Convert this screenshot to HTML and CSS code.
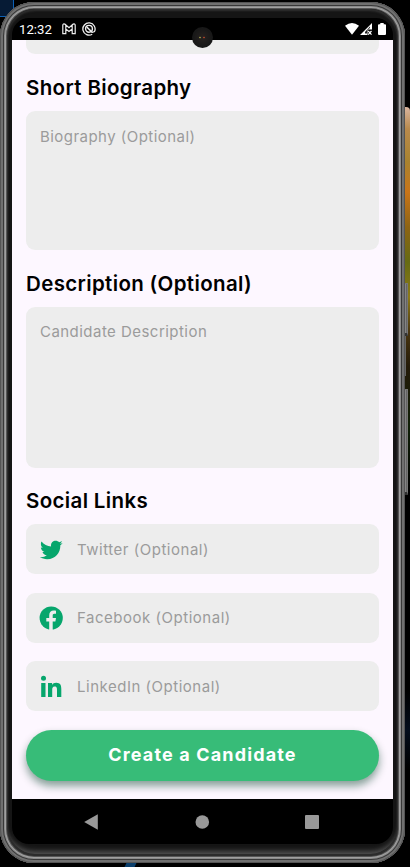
FILE: index.html
```html
<!DOCTYPE html>
<html lang="en">
<head>
<meta charset="utf-8">
<title>Create a Candidate</title>
<link rel="stylesheet" href="styles.css">
</head>
<body>
<div class="desktop">
  <div class="wall-corner"></div>
  <div class="wall-photo"></div>
  <div class="wall-glow"></div>
  <div class="wall-streak"></div>
  <div class="side-key power"></div>
  <div class="side-rail"></div>
  <div class="side-key volume"></div>
  <div class="phone">
    <div class="bezel">
      <div class="screen">
        <header class="status">
          <span class="clock">12:32</span>
          <svg class="mail" width="14" height="12" viewBox="0 0 14 12" fill="none" stroke="#eee" stroke-width="1.2"><path d="M.8 10.700V2.100Q1.200.3 2.800 1.100L7 4.700l4.200-3.600q1.600-.8 2 1v8.600h-3V6L7 8.500 3.800 6v4.700zM3.800 6V2M10.200 6V2"/></svg>
          <svg class="sync" width="14" height="14" viewBox="0 0 14 14" fill="none" stroke="#eee"><path d="M10.200 12.200A6.100 6.100 0 1 1 12.500 9.600L10 10.500" stroke-width="1.300"/><circle cx="7" cy="6.800" r="3.400" stroke-width="1.400"/><path d="M4.800 5l5.500 5.500" stroke-width="1.600"/></svg>
          <span class="grow"></span>
          <svg class="wifi" width="14" height="12" viewBox="0 0 14 12"><path d="M0 2.800Q7-2.600 14 2.800L7 11.800z" fill="#fff"/></svg>
          <svg class="signal" width="13" height="12" viewBox="0 0 13 12"><path d="M0 12L12 0v6.500H7.500V12z" fill="#fff"/><path d="M5 10.500h2V7l3-2V3.500L5 9z" fill="#222"/><path d="M8.200 8l3.300 3.600M11.500 8l-3.300 3.600" stroke="#fff" stroke-width="1.200"/></svg>
          <svg class="battery" width="8" height="12" viewBox="0 0 8 12"><path d="M2.300 0h3.400v1.300H7q1 0 1 1V11q0 1-1 1H1q-1 0-1-1V2.300q0-1 1-1h1.300z" fill="#fff"/></svg>
        </header>
        <main class="form">
          <div class="field stub"></div>
          <h2>Short Biography</h2>
          <div class="field area bio">Biography (Optional)</div>
          <h2>Description (Optional)</h2>
          <div class="field area desc">Candidate Description</div>
          <h2 class="social">Social Links</h2>
          <div class="links">
            <div class="field link">
              <svg width="24" height="24" viewBox="0 0 24 24"><path fill="#06a66c" d="M23.643 4.937c-.835.37-1.732.62-2.675.733.962-.576 1.700-1.490 2.048-2.578-.900.534-1.897.922-2.958 1.130-.850-.904-2.060-1.470-3.400-1.470-2.572 0-4.658 2.086-4.658 4.660 0 .364.042.718.120 1.060-3.873-.195-7.304-2.050-9.602-4.868-.400.690-.630 1.490-.630 2.342 0 1.616.823 3.043 2.072 3.878-.764-.025-1.482-.234-2.110-.583v.060c0 2.257 1.605 4.140 3.737 4.568-.392.106-.803.162-1.227.162-.300 0-.593-.028-.877-.082.593 1.850 2.313 3.198 4.352 3.234-1.595 1.250-3.604 1.995-5.786 1.995-.376 0-.747-.022-1.112-.065 2.062 1.323 4.510 2.093 7.140 2.093 8.570 0 13.255-7.098 13.255-13.254 0-.200-.005-.402-.014-.602.910-.658 1.700-1.477 2.323-2.410z"/></svg>
              <span>Twitter (Optional)</span>
            </div>
            <div class="field link">
              <svg width="24" height="24" viewBox="0 0 24 24"><circle cx="12.200" cy="12" r="11.600" fill="#06a66c"/><path fill="#ededed" d="M10.200 24v-8.500H7.300V12h2.900V9.500c0-3.200 1.700-4.900 4.600-4.900 1 0 2.200.2 2.200.2v3h-1.700c-1.200 0-1.600.8-1.600 1.600V12H17l-.6 3.500h-2.700V24z"/></svg>
              <span>Facebook (Optional)</span>
            </div>
            <div class="field link">
              <svg width="24" height="24" viewBox="0 0 24 24"><g fill="#06a66c"><circle cx="4.500" cy="3.300" r="2.500"/><path d="M2.200 8h4.300v14H2.200zM9 8h4.100v1.900c.7-1.300 2.200-2.200 4.100-2.200 4.300 0 5.100 2.800 5.100 6.500V22H18v-6.900c0-1.700 0-3.700-2.300-3.700s-2.500 1.800-2.500 3.600v7H9z"/></g></svg>
              <span>LinkedIn (Optional)</span>
            </div>
          </div>
          <button class="submit" type="button">Create a Candidate</button>
        </main>
        <nav class="nav">
          <svg width="16" height="16" viewBox="0 0 16 16"><path d="M14.800.3v15.400L1.200 8z" fill="#999"/></svg>
          <svg width="16" height="16" viewBox="0 0 16 16"><circle cx="8.300" cy="8" r="6.800" fill="#999"/></svg>
          <svg width="16" height="16" viewBox="0 0 16 16"><rect x="1" y="1" width="14" height="14" rx="1" fill="#999"/></svg>
        </nav>
      </div>
    </div>
    <div class="camera"></div>
  </div>
</div>
</body>
</html>
```
FILE: styles.css
```css
* { box-sizing: border-box; }
body { margin: 0; background: #000; font-family: Inter, "Liberation Sans", sans-serif; }
.desktop { position: relative; width: 410px; height: 867px; overflow: hidden; background: #000; padding: 2px 5px 4px 0; }
.wall-corner { position: absolute; left: 0; top: 0; width: 14px; height: 17px; background: #061b35; border-right: 1px solid #0c60b5; border-bottom: 1px solid #0c60b5; }
.wall-photo { position: absolute; left: 400px; top: 107px; width: 10px; height: 400px; border-top-right-radius: 4px; background: linear-gradient(#d9b5a0, #b98a4c 22px, #a9832f 55px, #c97519 85px, #8e6414 120px, #666b13 155px, #8d7a18 190px, #493510 225px, #241b09 260px, #102008 320px, #000 385px); }
.wall-glow { position: absolute; left: 404px; top: 690px; width: 6px; height: 80px; background: linear-gradient(#000, #040d1c 50%, #000); }
.wall-streak { position: absolute; left: 126px; top: 861px; width: 10px; height: 6px; background: #0b3f6c; transform: skewX(-25deg); }
.side-key { position: absolute; left: 402px; width: 6px; background: linear-gradient(90deg, #555, #888 60%, #555); border: 1px solid #777; border-bottom: 3px solid #333; }
.power { top: 283px; height: 53px; }
.volume { top: 389px; height: 106px; }
.side-rail { position: absolute; left: 404px; top: 336px; width: 2px; height: 40px; background: #666; }

.phone {
  position: relative; width: 405px; height: 861px; padding: 7px 8px 9px; border-radius: 34px;
  background: #2c2c2c;
  box-shadow: inset 0 0 0 1px #555, inset 0 0 0 3px #707070, inset 0 0 0 4px #383838, inset 0 0 0 5px #8a8a8a, inset 0 0 0 6px #a0a0a0, inset 0 0 0 7px #555;
}
.bezel { height: 845px; padding: 9px 4px 10px; border-radius: 27px; background: #151515; box-shadow: inset 0 -7px 5px -4px #505050, inset 0 2px 2px #303030; }
.screen { height: 826px; width: 381px; border-radius: 17px; overflow: hidden; background: #000; }
.status { height: 22px; display: flex; align-items: center; padding: 0 7px 0 7px; color: #fff; font-family: Roboto, sans-serif; font-size: 13.200px; }
.clock { width: 43px; }
.sync { margin-left: 6px; }
.grow { flex: 1; }
.signal { margin-left: 1px; }
.battery { margin-left: 5px; }
.camera { position: absolute; left: 192px; top: 25px; width: 21px; height: 21px; border-radius: 50%; background: radial-gradient(circle at 8px 10.500px, #8a8a45 0 .6px, transparent 1.200px), radial-gradient(circle at 12px 10.500px, #a04028 0 .6px, transparent 1.200px), radial-gradient(#272220, #181818 60%); }

.form { height: 759px; padding: 0 14px; background: #fdf7ff; overflow: hidden; }
.field { background: #ededed; border-radius: 9px; color: #9b9b9b; font-size: 15px; letter-spacing: .46px; line-height: 20px; }
.stub { height: 14px; border-radius: 0 0 9px 9px; }
h2 { margin: 0; height: 57px; padding-top: 21px; font-size: 20.500px; font-weight: 600; line-height: 26px; letter-spacing: .35px; color: #000; white-space: nowrap; }
h2.social { height: 56.500px; padding-top: 20px; }
.area { padding: 15px 14px; }
.bio { height: 138.500px; padding-top: 16px; }
.desc { height: 161px; }
.links { display: flex; flex-direction: column; gap: 18.500px; }
.link { height: 50px; display: flex; align-items: center; gap: 14px; padding: 1px 13px 0; letter-spacing: .52px; }
.submit { display: block; width: 100%; height: 50.500px; margin: 19px 0 0; padding: 0; border: 0; border-radius: 26px; background: #37bc78; color: #fff; font: 700 18px/24px Inter, sans-serif; letter-spacing: 1.150px; box-shadow: 0 5px 9px rgba(0, 60, 35, .48); }
.nav { height: 45px; display: flex; justify-content: space-between; align-items: center; padding: 0 73px 0 71px; }
```
